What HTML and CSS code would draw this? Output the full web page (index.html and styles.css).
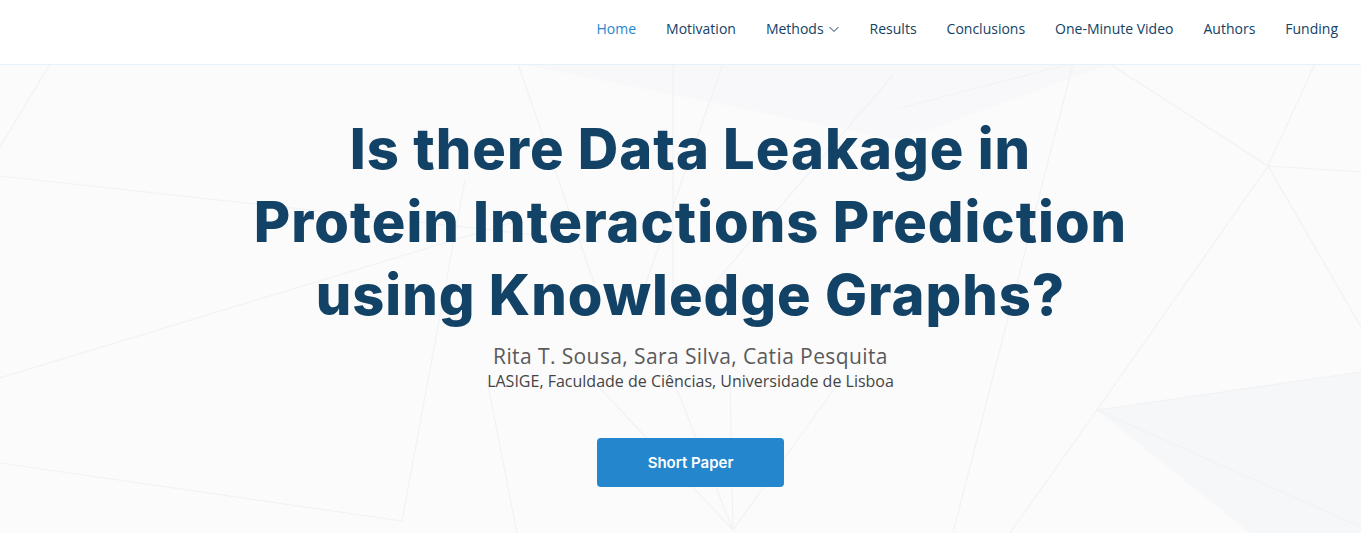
FILE: index.html
```html
<!DOCTYPE html>
<html lang="en">
<head>
<meta charset="utf-8">
<title>Is there Data Leakage in Protein Interactions Prediction using Knowledge Graphs?</title>
<link rel="stylesheet" href="styles.css">
</head>
<body>
<header class="header">
  <nav class="nav">
    <a class="nav-link active" href="#">Home</a>
    <a class="nav-link" href="#">Motivation</a>
    <a class="nav-link" href="#">Methods <svg class="chev" width="12" height="12" viewBox="0 0 12 12"><path d="M1.5 4 L6 8.5 L10.5 4" fill="none" stroke="currentColor" stroke-width="1"/></svg></a>
    <a class="nav-link" href="#">Results</a>
    <a class="nav-link" href="#">Conclusions</a>
    <a class="nav-link" href="#">One-Minute Video</a>
    <a class="nav-link" href="#">Authors</a>
    <a class="nav-link" href="#">Funding</a>
  </nav>
</header>
<section class="hero">
  <svg class="hero-bg" width="1361" height="468" viewBox="0 65 1361 468" preserveAspectRatio="none">
    <polygon points="300,64 1110,64 900,140 520,64" fill="#f5f6f7" opacity="0.5"/>
    <polygon points="1097,410 1361,372 1361,533 1250,533" fill="#f4f5f6" opacity="0.6"/>
    <g stroke="#f0f2f4" stroke-width="1.2" fill="none">
      <line x1="0" y1="147" x2="50" y2="64"/>
      <line x1="0" y1="176" x2="600" y2="242"/>
      <line x1="0" y1="378" x2="520" y2="220"/>
      <line x1="0" y1="463" x2="402" y2="521"/>
      <line x1="402" y1="521" x2="465" y2="180"/>
      <line x1="518" y1="64" x2="600" y2="300"/>
      <line x1="673" y1="64" x2="673" y2="300"/>
      <line x1="723" y1="64" x2="640" y2="300"/>
      <line x1="893" y1="75" x2="700" y2="300"/>
      <line x1="487" y1="380" x2="517" y2="533"/>
      <line x1="597" y1="385" x2="733" y2="530"/>
      <line x1="673" y1="380" x2="733" y2="530"/>
      <line x1="730" y1="380" x2="733" y2="530"/>
      <line x1="837" y1="385" x2="733" y2="530"/>
      <line x1="900" y1="108" x2="1070" y2="64"/>
      <line x1="1073" y1="64" x2="953" y2="533"/>
      <line x1="1110" y1="64" x2="1268" y2="166"/>
      <line x1="1268" y1="166" x2="1361" y2="327"/>
      <line x1="1268" y1="166" x2="1361" y2="172"/>
      <line x1="1315" y1="64" x2="1268" y2="166"/>
      <line x1="1268" y1="166" x2="1097" y2="410"/>
      <line x1="1097" y1="410" x2="1361" y2="372"/>
      <line x1="1097" y1="410" x2="1361" y2="527"/>
      <line x1="1097" y1="410" x2="1010" y2="533"/>
    </g>
  </svg>
  <div class="hero-content">
    <h1 class="title">Is there Data Leakage in<br>Protein Interactions Prediction<br>using Knowledge Graphs?</h1>
    <p class="authors">Rita T. Sousa, Sara Silva, Catia Pesquita</p>
    <p class="affil">LASIGE, Faculdade de Ciências, Universidade de Lisboa</p>
    <a class="btn" href="#">Short Paper</a>
  </div>
</section>
</body>
</html>
```
FILE: styles.css
```css
* { box-sizing: border-box; }
html, body { margin: 0; padding: 0; }
body {
  font-family: "Open Sans", "Liberation Sans", sans-serif;
  background: #fff;
  color: #444;
  overflow: hidden;
}
.header {
  height: 65px;
  border-bottom: 1px solid #e6f1fa;
  background: #fff;
  display: flex;
  justify-content: flex-end;
  align-items: center;
  padding: 0 23px 7px 0;
}
.nav {
  display: flex;
  align-items: center;
  gap: 30px;
}
.nav-link {
  font-family: "Open Sans", sans-serif;
  font-size: 14px;
  color: #124265;
  text-decoration: none;
  display: flex;
  align-items: center;
  gap: 4px;
  white-space: nowrap;
}
.nav-link.active { color: #2487ce; }
.chev { display: block; margin-top: 1px; }
.hero {
  position: relative;
  height: 468px;
  background: #fbfbfc;
  overflow: hidden;
}
.hero-bg {
  position: absolute;
  left: 0;
  top: 0;
  width: 100%;
  height: 100%;
}
.hero-content {
  position: relative;
  display: flex;
  flex-direction: column;
  align-items: center;
  text-align: center;
  padding: 48px 0 0 20px;
}
.title {
  margin: 0;
  font-family: "Inter", sans-serif;
  font-weight: 800;
  font-size: 56px;
  line-height: 73px;
  letter-spacing: 1px;
  color: #124265;
}
.authors {
  margin: 10px 0 0;
  font-family: "Open Sans", sans-serif;
  font-size: 21px;
  line-height: 28px;
  letter-spacing: 0.4px;
  color: #5a5a5a;
}
.affil {
  margin: 0;
  font-family: "Open Sans", sans-serif;
  font-size: 16px;
  line-height: 22px;
  color: #444;
}
.btn {
  margin-top: 46px;
  width: 187px;
  height: 49px;
  border-radius: 4px;
  background: #2487ce;
  color: #fff;
  text-decoration: none;
  font-family: "Inter", sans-serif;
  font-weight: 600;
  font-size: 15px;
  display: flex;
  align-items: center;
  justify-content: center;
}
```
